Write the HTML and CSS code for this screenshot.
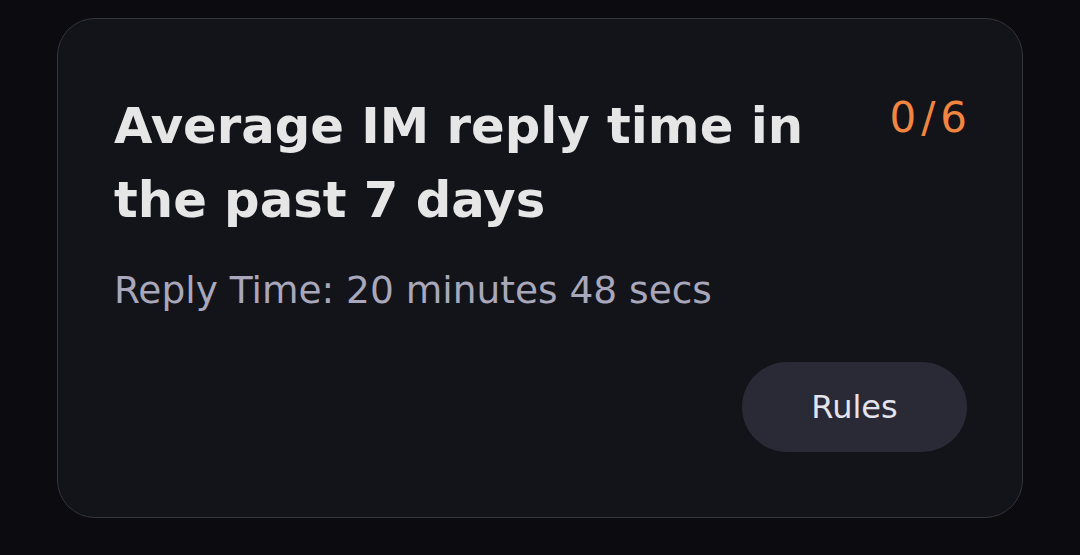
FILE: index.html
```html
<!DOCTYPE html>
<html lang="en">
<head>
    <meta charset="UTF-8">
    <meta name="viewport" content="width=device-width, initial-scale=1.0">
    <title>Reply time</title>
    <link rel="stylesheet" href="styles.css">
</head>
<body>

<div class="card">
    <div class="card-head">
        <h2 class="card-title">Average IM reply time in the past 7 days</h2>
        <span class="progress">0/6</span>
    </div>
    <p class="reply-time">Reply Time: 20 minutes 48 secs</p>
    <button class="rules-button">Rules</button>
</div>

</body>
</html>
```
FILE: styles.css
```css
body {
    font-family: 'DejaVu Sans', sans-serif;
    background-color: #0c0b10; /* near black page */
    margin: 0;
    padding: 18px 0 0 57px;
}
.card {
    box-sizing: border-box;
    width: 966px;
    height: 500px;
    background-color: #131419;
    border: 1px solid #34343f;
    border-radius: 38px;
    padding: 70px 55px 0 56px;
    display: flex;
    flex-direction: column;
}
.card-head {
    display: flex;
    justify-content: space-between;
    align-items: flex-start;
    gap: 60px;
}
.card-title {
    margin: 0;
    font-size: 49.7px;
    font-weight: 700;
    line-height: 74px;
    color: #e6e6e6;
}
.progress {
    margin-top: 4px;
    font-size: 42px;
    line-height: 1.2;
    letter-spacing: 5px;
    margin-right: -5px;
    color: #f2853f;
}
.reply-time {
    margin: 29px 0 0;
    font-size: 37.5px;
    line-height: 1.3;
    color: #a8a7bb;
}
.rules-button {
    align-self: flex-end;
    margin-top: 47px;
    width: 225px;
    height: 90px;
    border: none;
    border-radius: 45px;
    background-color: #2a2a37;
    color: #e4e4ec;
    font-family: 'DejaVu Sans', sans-serif;
    font-size: 32px;
    cursor: pointer;
}
```
